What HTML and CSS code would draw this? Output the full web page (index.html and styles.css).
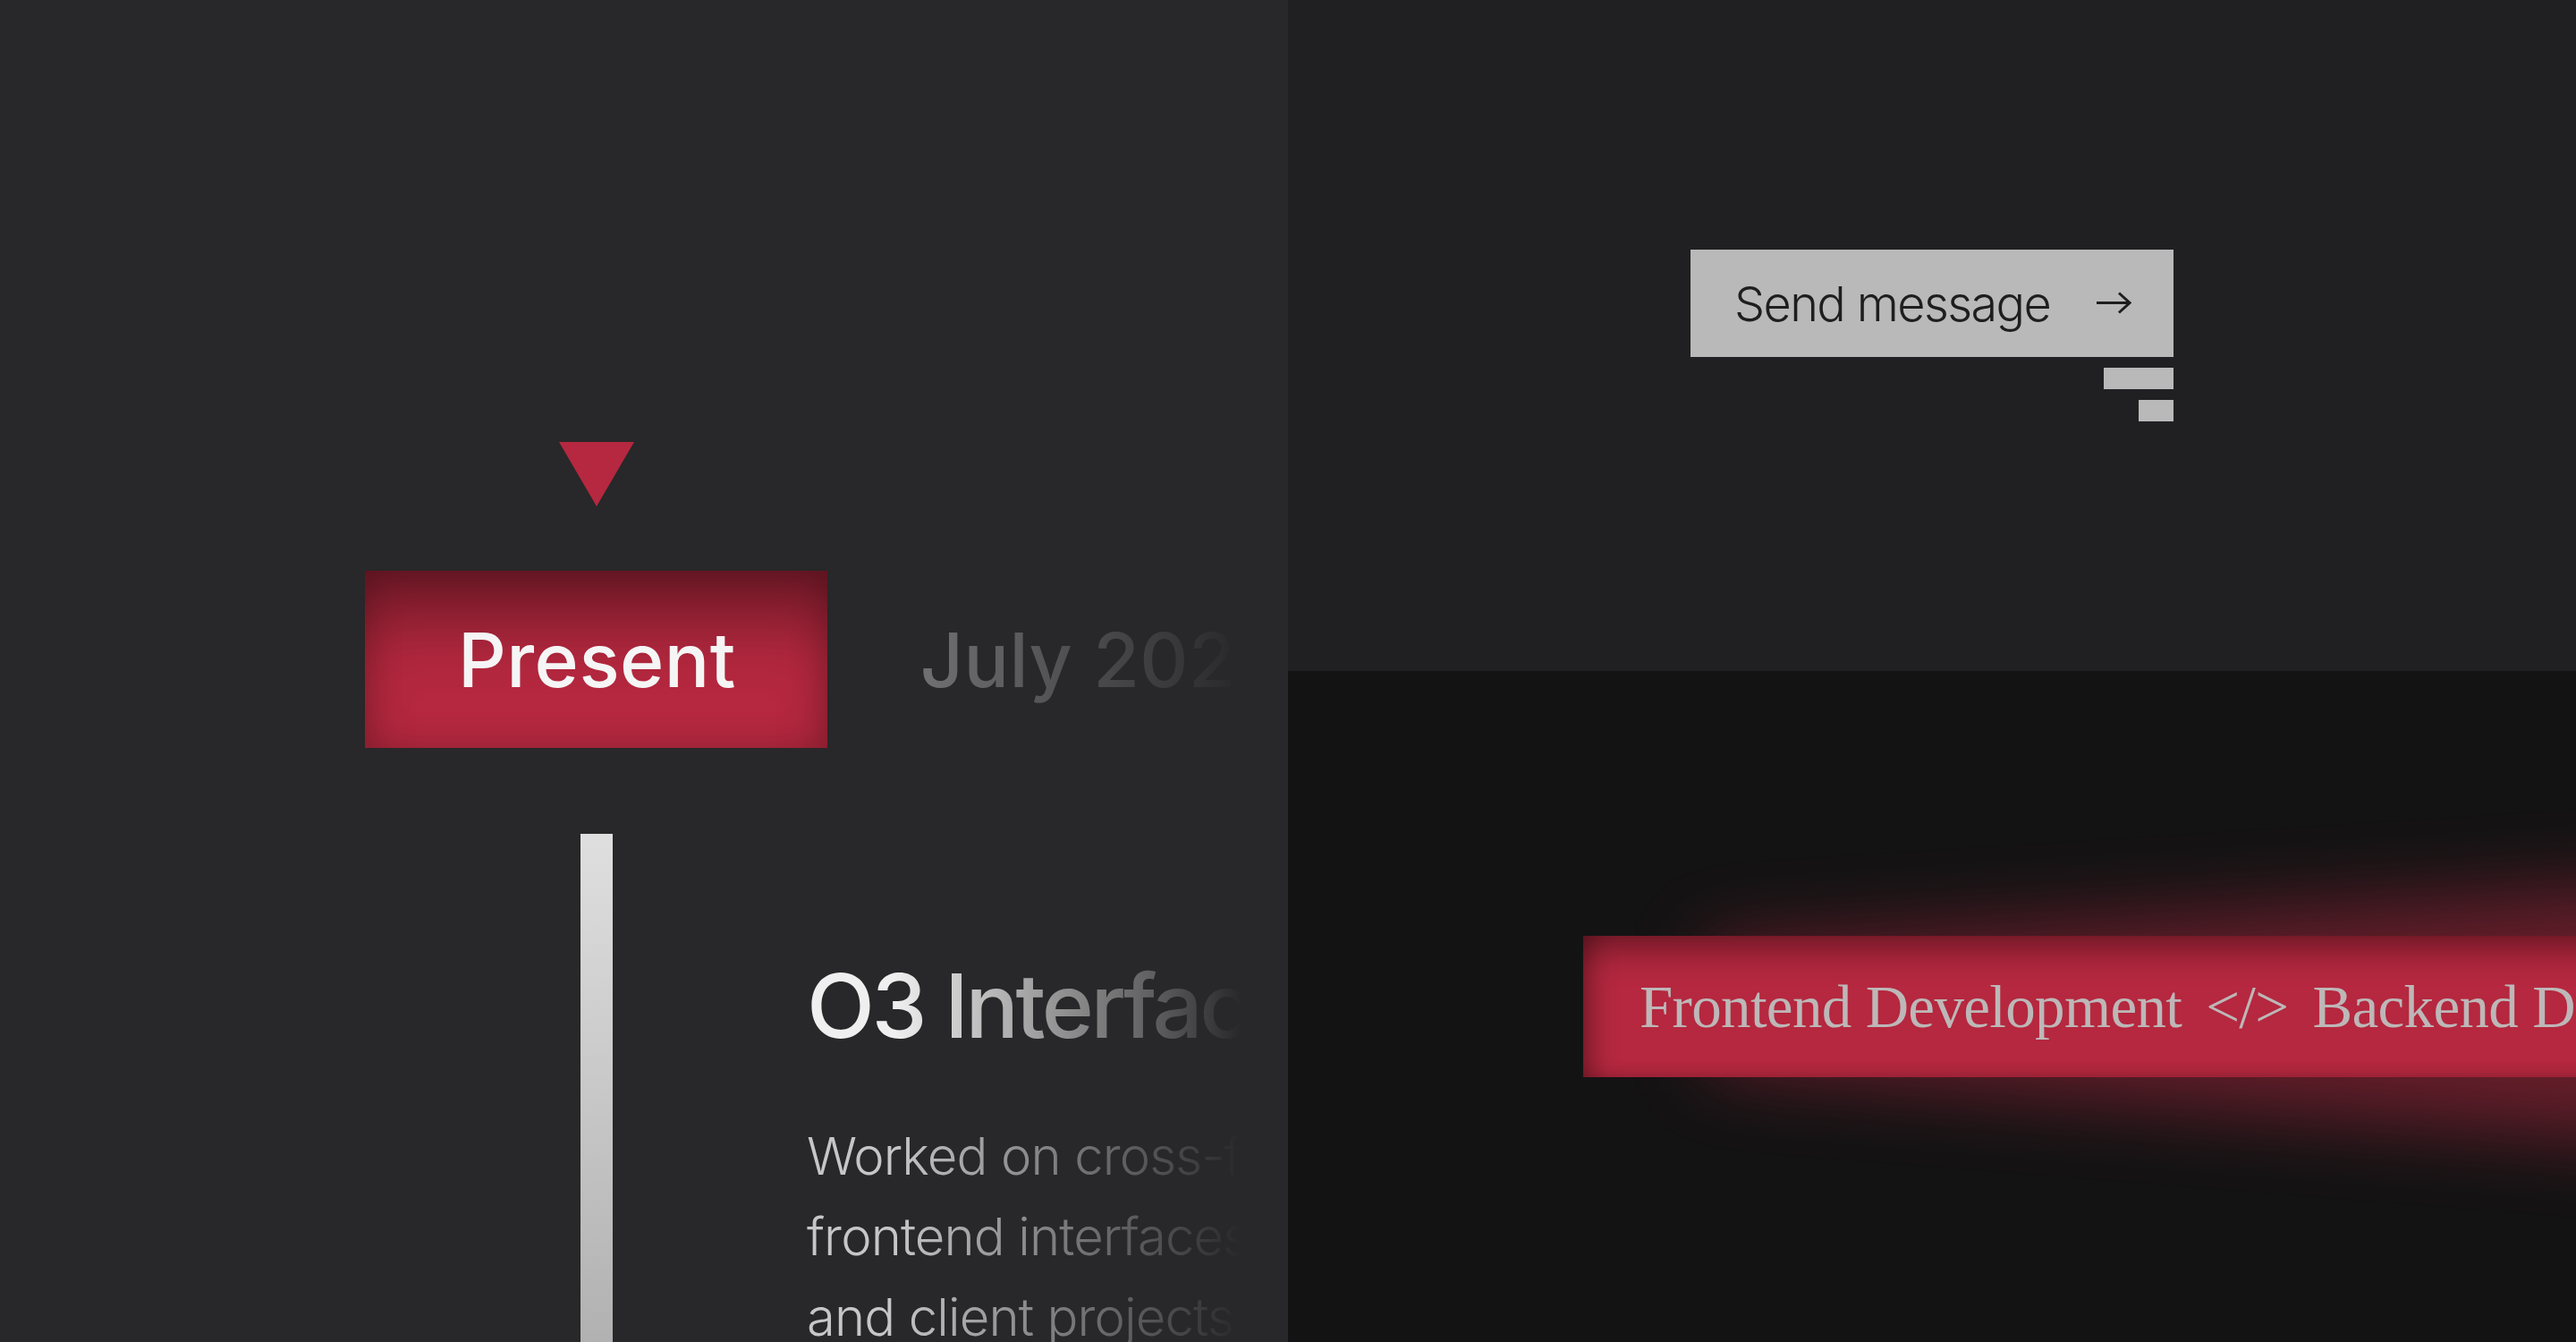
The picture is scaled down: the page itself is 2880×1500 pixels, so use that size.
FILE: index.html
```html
<!DOCTYPE html>
<html lang="en">
<head>
  <meta charset="UTF-8" />
  <title>Portfolio Sections</title>
  <link rel="stylesheet" href="styles.css">
</head>
<body>
  <div class="page">
    <!-- Experience timeline -->
    <section class="timeline">
      <div class="timeline-inner">
        <div class="marker"></div>
        <div class="dates">
          <div class="date active">Present</div>
          <div class="date">July 2024</div>
          <div class="date">March 2023</div>
        </div>
        <div class="entry">
          <div class="entry-bar"></div>
          <div class="entry-body">
            <h2>O3 Interface Studio</h2>
            <p>Worked on cross-functional product teams<br>frontend interfaces for internal dashboards<br>and client projects across the studio.</p>
          </div>
        </div>
      </div>
      <!-- fades the row out toward the edge -->
      <div class="timeline-fade"></div>
    </section>

    <!-- Contact -->
    <section class="contact">
      <div class="send">
        <button class="send-btn">
          <span>Send message</span>
          <svg class="send-arrow" width="40" height="26" viewBox="0 0 40 26">
            <path d="M1 12.5 H38 M26 1.5 L38 12.5 L26 23.5" fill="none" stroke="#1f1e1f" stroke-width="3"/>
          </svg>
        </button>
        <div class="send-bars">
          <div class="send-bar"></div>
          <div class="send-bar short"></div>
        </div>
      </div>
    </section>

    <!-- Skills band -->
    <section class="skills">
      <div class="band-wrap">
        <div class="band-glow"></div>
        <div class="band">
          <span>Frontend Development</span>
          <span>&lt;/&gt;</span>
          <span>Backend Development</span>
          <span>&lt;/&gt;</span>
          <span>UI/UX Design</span>
        </div>
      </div>
    </section>
  </div>
</body>
</html>
```

FILE: styles.css
```css
/********************************************************
 * Page
 ********************************************************/
body {
  margin: 0;
  background-color: #141314;
  font-family: Inter, "Noto Sans", sans-serif;
}

.page {
  width: 2880px;
  height: 1500px;
  display: grid;
  grid-template-columns: 1440px 1440px;
  grid-template-rows: 750px 750px;
  overflow: hidden;
}

/********************************************************
 * Timeline (left)
 ********************************************************/
.timeline {
  grid-row: 1 / 3;
  background-color: #282729;
  position: relative;
  overflow: hidden;
}

.timeline-inner {
  padding: 494px 0 0 408px;
}

.marker {
  width: 0;
  height: 0;
  margin-left: 217px;
  border-left: 42px solid transparent;
  border-right: 42px solid transparent;
  border-top: 72px solid #b5283f;
}

.dates {
  display: flex;
  margin-top: 72px;
  white-space: nowrap;
}

.date {
  height: 198px;
  padding: 0 102px 0 104px;
  display: flex;
  align-items: center;
  font-size: 84px;
  font-weight: 500;
  letter-spacing: 0.005em;
  color: #767577;
}
.date.active {
  background-color: #b5283f;
  color: #f5f5f5;
  box-shadow: inset 0 80px 80px -30px rgba(0,0,0,0.42), inset 0 0 40px rgba(0,0,0,0.22);
}

.entry {
  display: flex;
  margin-top: 96px;
}

.entry-bar {
  width: 36px;
  height: 620px;
  margin-left: 241px;
  flex-shrink: 0;
  background: linear-gradient(to bottom, #dfdfdf, #adadad);
}

.entry-body {
  margin-left: 217px;
  padding-top: 132px;
  white-space: nowrap;
}

.entry-body h2 {
  margin: 0;
  font-size: 99px;
  line-height: 120px;
  font-weight: 500;
  letter-spacing: -0.035em;
  color: #efefef;
}

.entry-body p {
  margin: 63px 0 0;
  font-size: 58px;
  line-height: 90px;
  font-weight: 300;
  letter-spacing: -0.015em;
  color: #c6c6c6;
}

.timeline-fade {
  position: absolute;
  top: 0;
  right: 0;
  bottom: 0;
  width: 440px;
  background: linear-gradient(to right, rgba(40,39,41,0), rgba(40,39,41,0.75) 68%, #282729 88%);
}

/********************************************************
 * Contact (top right)
 ********************************************************/
.contact {
  background-color: #201f21;
  display: flex;
  justify-content: center;
  padding-top: 279px;
}

.send {
  display: flex;
  flex-direction: column;
  align-items: flex-end;
}

.send-btn {
  height: 120px;
  width: 540px;
  padding: 0 47px 0 49px;
  display: flex;
  align-items: center;
  justify-content: space-between;
  background-color: #b9b9b9;
  border: none;
  font-family: Inter, sans-serif;
  font-size: 54px;
  font-weight: 300;
  letter-spacing: -0.03em;
  color: #1f1e1f;
  cursor: pointer;
}

.send-arrow {
  display: block;
}

.send-bars {
  display: flex;
  flex-direction: column;
  align-items: flex-end;
  gap: 12px;
  margin-top: 12px;
}
.send-bar {
  width: 78px;
  height: 24px;
  background-color: #b9b9b9;
}
.send-bar.short {
  width: 39px;
}

/********************************************************
 * Skills band (bottom right)
 ********************************************************/
.skills {
  background-color: #141314;
  overflow: hidden;
  padding: 296px 0 0 330px;
}

.band-wrap {
  position: relative;
}

.band-glow {
  position: absolute;
  left: 140px;
  right: -300px;
  top: -70px;
  bottom: -90px;
  filter: blur(40px);
}
.band-glow::before {
  content: "";
  position: absolute;
  top: 0;
  left: 0;
  right: 0;
  bottom: 0;
  background-color: rgba(181, 40, 63, 0.5);
  clip-path: polygon(0 80px, 100% 0, 100% 100%, 0 calc(100% - 100px));
}

.band {
  position: relative;
  height: 158px;
  width: 1800px;
  padding-left: 63px;
  display: flex;
  align-items: center;
  gap: 27px;
  white-space: nowrap;
  background-color: #b5283f;
  box-shadow: inset 0 34px 36px -18px rgba(0,0,0,0.38), inset 24px 0 30px -16px rgba(0,0,0,0.35), inset 0 -14px 20px -14px rgba(0,0,0,0.2);
  font-family: "Liberation Serif", serif;
  font-size: 67px;
  color: #bdb7b8;
  letter-spacing: -0.01em;
}
```
